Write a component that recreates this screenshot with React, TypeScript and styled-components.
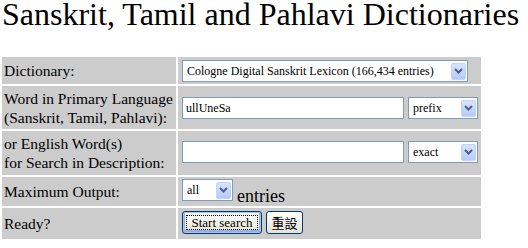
import styled, { createGlobalStyle } from "styled-components";

const serif = `"Times New Roman", "Liberation Serif", serif`;

const Global = createGlobalStyle`
  body {
    margin: 0;
    background: #fff;
    font-family: ${serif};
  }
`;

const Title = styled.h1`
  margin: 0;
  padding: 0 0 0 2px;
  height: 57px;
  font-family: ${serif};
  font-size: 32px;
  font-weight: normal;
  line-height: 28px;
  color: #000;
  white-space: nowrap;
`;

const Form = styled.div`
  display: grid;
  grid-template-columns: 174px 303px;
  grid-template-rows: 27px 43px 44px 29px 31px;
  gap: 2px;
  margin-left: 2px;
`;

const Label = styled.div`
  background: #cccccc;
  padding: 0 0 0 2px;
  display: flex;
  align-items: center;
  font-family: ${serif};
  font-size: 15.5px;
  line-height: 19px;
  color: #000;
  white-space: nowrap;
`;

const Field = styled.div<{ $top?: number }>`
  background: #cccccc;
  padding: ${({ $top }) => $top ?? 3}px 0 0 4px;
  display: flex;
  align-items: flex-start;
  gap: 4px;
`;

const Box = styled.div<{ $w: number }>`
  width: ${({ $w }) => $w}px;
  height: 22px;
  box-sizing: border-box;
  border: 1px solid #7f9db9;
  background: #fff;
  display: flex;
  align-items: center;
  justify-content: space-between;
  padding: 0 1px 0 4px;
  font-family: ${serif};
  font-size: 12px;
  color: #000;
  white-space: nowrap;
  overflow: hidden;
`;

const Arrow = styled.span`
  flex: none;
  width: 15px;
  height: 17px;
  box-sizing: border-box;
  border: 1px solid #c3d3fd;
  border-radius: 2px;
  background: linear-gradient(#d8e4fe, #b5c9fb);
  display: flex;
  align-items: center;
  justify-content: center;
`;

const TextInput = styled.input<{ $w: number }>`
  width: ${({ $w }) => $w}px;
  height: 22px;
  box-sizing: border-box;
  border: 1px solid #7f9db9;
  padding: 0 3px;
  margin: 0;
  font-family: ${serif};
  font-size: 12px;
  color: #000;
  outline: none;
`;

const Suffix = styled.span`
  font-family: ${serif};
  font-size: 18px;
  line-height: 22px;
  padding-top: 6px;
`;

const Button = styled.button<{ $focus?: boolean; $w: number }>`
  width: ${({ $w }) => $w}px;
  height: 23px;
  margin: 0;
  padding: 0;
  border: 1px solid #003c74;
  border-radius: 3px;
  background: linear-gradient(#ffffff, #f0efe7 60%, #e3e1d6);
  font-family: ${serif}, "Noto Sans CJK TC";
  font-size: 13px;
  color: #000;
  box-shadow: ${({ $focus }) =>
    $focus ? "inset 0 0 0 1px #a9c4f0, inset 0 -1px 0 2px #97aee2" : "none"};
  position: relative;
  &::after {
    content: "";
    display: ${({ $focus }) => ($focus ? "block" : "none")};
    position: absolute;
    inset: 3px;
    border: 1px dotted #000;
  }
`;

const Chevron = () => (
  <Arrow>
    <svg width="9" height="6" viewBox="0 0 9 6">
      <path d="M1 1 L4.5 4.5 L8 1" fill="none" stroke="#4d6185" strokeWidth="2" />
    </svg>
  </Arrow>
);

const Select = ({ w, text }: { w: number; text: string }) => (
  <Box $w={w}>
    <span>{text}</span>
    <Chevron />
  </Box>
);

export default function App() {
  return (
    <>
      <Global />
      <Title>Sanskrit, Tamil and Pahlavi Dictionaries</Title>
      <Form>
        <Label>Dictionary:</Label>
        <Field>
          <Select w={286} text="Cologne Digital Sanskrit Lexicon (166,434 entries)" />
        </Field>

        <Label>
          Word in Primary Language
          <br />
          (Sanskrit, Tamil, Pahlavi):
        </Label>
        <Field $top={11}>
          <TextInput $w={222} defaultValue="ullUneSa" />
          <Select w={70} text="prefix" />
        </Field>

        <Label>
          or English Word(s)
          <br />
          for Search in Description:
        </Label>
        <Field $top={10}>
          <TextInput $w={222} defaultValue="" />
          <Select w={70} text="exact" />
        </Field>

        <Label>Maximum Output:</Label>
        <Field $top={2}>
          <Select w={51} text="all" />
          <Suffix>entries</Suffix>
        </Field>

        <Label>Ready?</Label>
        <Field $top={3}>
          <Button $w={80} $focus>
            Start search
          </Button>
          <Button $w={37}>重設</Button>
        </Field>
      </Form>
    </>
  );
}
